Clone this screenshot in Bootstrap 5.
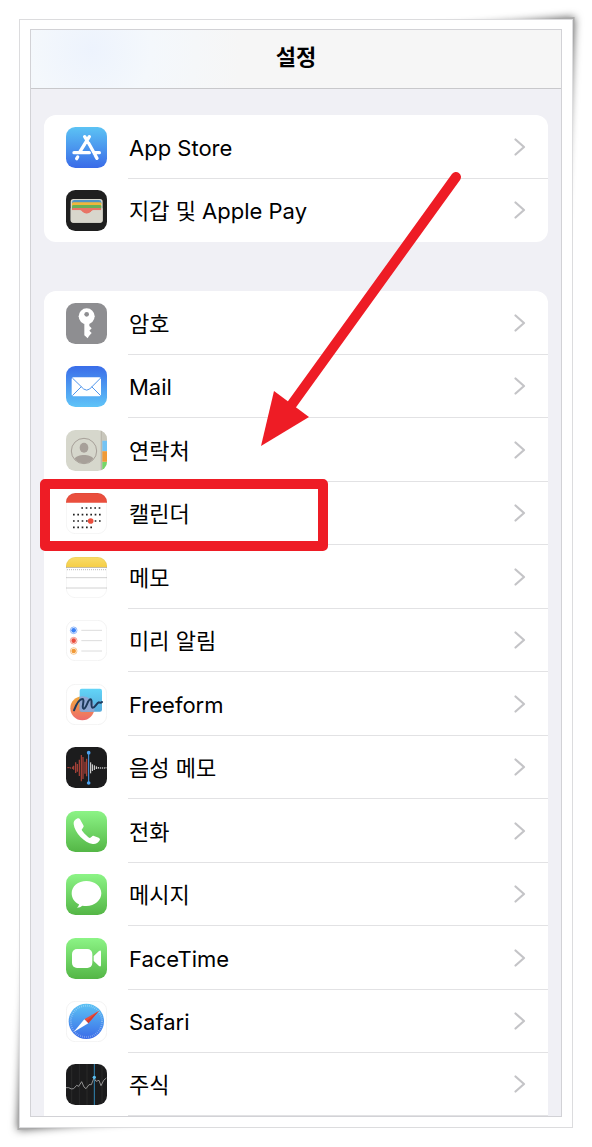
<!DOCTYPE html>
<html lang="ko">
<head>
<meta charset="utf-8">
<meta name="viewport" content="width=device-width, initial-scale=1">
<title>설정</title>
<link href="https://cdn.jsdelivr.net/npm/bootstrap@5.3.0/dist/css/bootstrap.min.css" rel="stylesheet">
<style>
  body { background: #fff; color: #000; font-family: Inter, "Noto Sans CJK KR", sans-serif; font-size: 22px; line-height: 32px; }
  .page { padding: 19px; }
  .photo-frame { position: relative; z-index: 0; }
  .photo-frame::before, .photo-frame::after {
    content: ""; position: absolute; z-index: -1; width: 150px; height: 240px;
    background: #aaa; box-shadow: 0 0 9px rgba(0, 0, 0, .65);
  }
  .photo-frame::before { top: 11px; right: 11px; transform: skew(-3deg, -5deg); transform-origin: left bottom; }
  .photo-frame::after { bottom: 11px; left: 11px; transform: skew(-3deg, -5deg); transform-origin: right top; }
  .photo-paper { background: #fff; border: 1px solid #dcdcde; padding: 9px 10px 10px; }
  .phone { background: #f0f0f5; border: 1px solid #d2d2d6; }
  .title-bar { background: radial-gradient(circle at 60px 20px, #edf3fd, #f4f8fc 60px, #f6f6f6 150px); border-bottom: 1px solid #c8c8cb; padding: 11px 0 15px; }
  .title-bar h1 { font-size: 22px; line-height: 32px; font-weight: 600; }
  .groups { padding: 26px 13px 0; gap: 49px; }
  .settings-group { --bs-list-group-border-radius: 12px; --bs-list-group-border-width: 0; }
  .settings-row { background: #fff; height: 64px; padding: 0 0 0 22px; gap: 21px; color: #000; }
  .settings-row:nth-child(even), .settings-row:last-child { height: 63px; }
  .settings-row:hover { color: #000; }
  .row-body { border-bottom: 1px solid #e2e2e4; padding: 2px 22px 0 1px; }
  .no-line .row-body { border-color: transparent; }
  .app-icon { width: 41px; height: 41px; flex: none; }
  .chevron { width: 12px; height: 18px; margin-bottom: 2px; }
  .marked { z-index: 3; }
  .mark-box { position: absolute; left: -4px; top: -3px; width: 288px; height: 72px; border: 10px solid #ee1c25; border-radius: 5px; pointer-events: none; }
  .mark-arrow { position: absolute; left: 230px; top: 141px; width: 202px; height: 278px; z-index: 4; pointer-events: none; }
</style>
</head>
<body>
<svg width="0" height="0" class="position-absolute" aria-hidden="true">
  <defs>
    <linearGradient id="blueDown" x1="0" y1="0" x2="0" y2="1"><stop stop-color="#5cc3f4"/><stop offset="1" stop-color="#3a6be8"/></linearGradient>
    <linearGradient id="blueUp" x1="0" y1="0" x2="0" y2="1"><stop stop-color="#3a6de9"/><stop offset="1" stop-color="#5fc4f8"/></linearGradient>
    <linearGradient id="green" x1="0" y1="0" x2="0" y2="1"><stop stop-color="#8cf486"/><stop offset="1" stop-color="#54b646"/></linearGradient>
    <linearGradient id="yellow" x1="0" y1="0" x2="0" y2="1"><stop stop-color="#f9dd6a"/><stop offset="1" stop-color="#f5cd45"/></linearGradient>
    <linearGradient id="orange" x1="0" y1="0" x2="0" y2="1"><stop stop-color="#f2a93b"/><stop offset="1" stop-color="#ee6a6c"/></linearGradient>
    <linearGradient id="sky" x1="0" y1="0" x2="0" y2="1"><stop stop-color="#62d5f8"/><stop offset="1" stop-color="#55aadb"/></linearGradient>
    <clipPath id="tile"><rect width="123" height="123" rx="28"/></clipPath>
    <symbol id="chev" viewBox="0 0 12 18"><path d="M1.500 1.500 10 9l-8.500 7.500" fill="none" stroke="#c4c4c7" stroke-width="2.200" stroke-linecap="round" stroke-linejoin="round"/></symbol>
  </defs>
</svg>

<main class="page">
<div class="photo-frame">
<div class="photo-paper">
<div class="phone position-relative">
  <header class="title-bar text-center"><h1 class="m-0">설정</h1></header>
  <div class="groups d-flex flex-column">

    <div class="list-group settings-group">
      <a href="#" class="list-group-item settings-row d-flex align-items-center">
        <svg class="app-icon" viewBox="0 0 123 123" aria-hidden="true"><rect width="123" height="123" rx="28" fill="url(#blueDown)"/><g stroke="#fff" stroke-width="10" stroke-linecap="round" fill="none"><path d="M56 29 64 42M70 29 42 74M24 77H70M84 77H100M68 49 93 94M35 90 32 95"/></g><path d="M63 52 83 88" stroke="#4a91ee" stroke-width="2"/></svg>
        <span class="row-body d-flex flex-grow-1 align-items-center justify-content-between align-self-stretch">App Store<svg class="chevron" aria-hidden="true"><use href="#chev"/></svg></span>
      </a>
      <a href="#" class="list-group-item settings-row no-line d-flex align-items-center">
        <svg class="app-icon" viewBox="0 0 123 123" aria-hidden="true"><rect width="123" height="123" rx="28" fill="#1f1f1f"/><rect x="14" y="27" width="96" height="71" rx="8" fill="#d8d6cc"/><path d="M18 37q0-7 7-7h74q7 0 7 7v4H18z" fill="#5094c4"/><path d="M18 40q0-3 5-3h78q5 0 5 3v8H18z" fill="#f0b63b"/><path d="M18 49q0-4 5-4h78q5 0 5 4v8H18z" fill="#69b058"/><path d="M18 57q0-3 5-3h78q5 0 5 3v4H82c-6 0-7 10-20 10S48 61 42 61H18z" fill="#e87466"/><path d="M14 58v-3h4v6h24c6 0 7 10 20 10s14-10 20-10h24v-6h4v35q0 8-8 8H22q-8 0-8-8z" fill="#d8d6cc"/></svg>
        <span class="row-body d-flex flex-grow-1 align-items-center justify-content-between align-self-stretch">지갑 및 Apple Pay<svg class="chevron" aria-hidden="true"><use href="#chev"/></svg></span>
      </a>
    </div>

    <div class="list-group settings-group rounded-bottom-0">
      <a href="#" class="list-group-item settings-row d-flex align-items-center">
        <svg class="app-icon" viewBox="0 0 123 123" aria-hidden="true"><rect width="123" height="123" rx="28" fill="#8e8e91"/><circle cx="62" cy="40" r="24" fill="#fff"/><path d="M55 58h15v11l7 7-7 7 7 7-8 9-4 7-10-9z" fill="#fff"/><circle cx="62" cy="34" r="7" fill="#8e8e91"/></svg>
        <span class="row-body d-flex flex-grow-1 align-items-center justify-content-between align-self-stretch">암호<svg class="chevron" aria-hidden="true"><use href="#chev"/></svg></span>
      </a>
      <a href="#" class="list-group-item settings-row d-flex align-items-center">
        <svg class="app-icon" viewBox="0 0 123 123" aria-hidden="true"><rect width="123" height="123" rx="28" fill="url(#blueUp)"/><rect x="17" y="34" width="88" height="57" rx="5" fill="#fff"/><path d="M19 36 53 69q9 7 18 0L104 36M19 89l27-27M104 89 77 62" fill="none" stroke="#5096ec" stroke-width="3"/></svg>
        <span class="row-body d-flex flex-grow-1 align-items-center justify-content-between align-self-stretch">Mail<svg class="chevron" aria-hidden="true"><use href="#chev"/></svg></span>
      </a>
      <a href="#" class="list-group-item settings-row d-flex align-items-center">
        <svg class="app-icon" viewBox="0 0 123 123" aria-hidden="true"><g clip-path="url(#tile)"><path fill="#d6d7cc" d="M0 0h123v123H0z"/><path fill="#bbb8ad" d="M104 0h5v123h-5z"/><path fill="#c8c6bb" d="M109 0h14v32h-14z"/><path fill="#73c3f4" d="M109 32h14v31h-14z"/><path fill="#ef9a37" d="M109 64h14v31h-14z"/><path fill="#75d768" d="M109 96h14v27h-14z"/></g><circle cx="54" cy="63" r="38" fill="none" stroke="#a7a099" stroke-width="3"/><ellipse cx="54" cy="53" rx="13" ry="15" fill="#a7a099"/><path d="M26 86c7-15 49-15 56 0-14 18-42 18-56 0z" fill="#a7a099"/></svg>
        <span class="row-body d-flex flex-grow-1 align-items-center justify-content-between align-self-stretch">연락처<svg class="chevron" aria-hidden="true"><use href="#chev"/></svg></span>
      </a>
      <a href="#" class="list-group-item settings-row marked d-flex align-items-center">
        <svg class="app-icon" viewBox="0 0 123 123" aria-hidden="true"><g clip-path="url(#tile)"><path fill="#fff" d="M0 0h123v123H0z"/><path fill="#ea4e3d" d="M0 0h123v29H0z"/></g><rect x="1" y="1" width="121" height="121" rx="27" fill="none" stroke="#000" stroke-opacity=".07" stroke-width="2"/><g stroke="#222" stroke-width="5" stroke-dasharray="5 8"><path d="M46 45h58M21 65h83M21 84h83M21 103h57"/></g><circle cx="74" cy="84" r="8.500" fill="#ea4e3d"/></svg>
        <span class="row-body d-flex flex-grow-1 align-items-center justify-content-between align-self-stretch">캘린더<svg class="chevron" aria-hidden="true"><use href="#chev"/></svg></span>
        <span class="mark-box"></span>
      </a>
      <a href="#" class="list-group-item settings-row d-flex align-items-center">
        <svg class="app-icon" viewBox="0 0 123 123" aria-hidden="true"><g clip-path="url(#tile)"><path fill="#fff" d="M0 0h123v123H0z"/><path fill="url(#yellow)" d="M0 0h123v31H0z"/><path fill="#c5bda5" d="M0 30h123v3H0z"/><path d="M3 38h120" stroke="#aaa" stroke-width="4" stroke-dasharray="2 4"/><path d="M0 62h123M0 93h123" stroke="#d2d2d2" stroke-width="3"/></g><rect x="1" y="1" width="121" height="121" rx="27" fill="none" stroke="#000" stroke-opacity=".07" stroke-width="2"/></svg>
        <span class="row-body d-flex flex-grow-1 align-items-center justify-content-between align-self-stretch">메모<svg class="chevron" aria-hidden="true"><use href="#chev"/></svg></span>
      </a>
      <a href="#" class="list-group-item settings-row d-flex align-items-center">
        <svg class="app-icon" viewBox="0 0 123 123" aria-hidden="true"><rect x="1" y="1" width="121" height="121" rx="27" fill="#fff" stroke="#ededed" stroke-width="2"/><path d="M46 31h62M46 62h62M46 93h62" stroke="#dcdcdc" stroke-width="3"/><g fill="none" stroke-width="3" stroke-opacity=".55"><circle cx="23" cy="31" r="10" stroke="#3b82f6"/><circle cx="23" cy="62" r="10" stroke="#ea4e3d"/><circle cx="23" cy="93" r="10" stroke="#f19a37"/></g><circle cx="23" cy="31" r="7" fill="#3b82f6"/><circle cx="23" cy="62" r="7" fill="#ea4e3d"/><circle cx="23" cy="93" r="7" fill="#f19a37"/></svg>
        <span class="row-body d-flex flex-grow-1 align-items-center justify-content-between align-self-stretch">미리 알림<svg class="chevron" aria-hidden="true"><use href="#chev"/></svg></span>
      </a>
      <a href="#" class="list-group-item settings-row d-flex align-items-center">
        <svg class="app-icon" viewBox="0 0 123 123" aria-hidden="true"><rect x="1" y="1" width="121" height="121" rx="27" fill="#fff" stroke="#ededed" stroke-width="2"/><circle cx="49" cy="73" r="36" fill="url(#orange)"/><rect x="41" y="14" width="67" height="69" rx="6" fill="url(#sky)"/><path d="M41 38q18-4 34 9 12 13 10 36H47q-6 0-6-6z" fill="#8fa6d2"/><path d="M24 79c7-18 17-34 25-34 9 0-4 28 4 29 8 0 12-27 20-28 8 0-1 24 7 25 8 0 11-14 19-16 4 2 6 2 9-1" fill="none" stroke="#1e3a5c" stroke-width="6" stroke-linecap="round"/></svg>
        <span class="row-body d-flex flex-grow-1 align-items-center justify-content-between align-self-stretch">Freeform<svg class="chevron" aria-hidden="true"><use href="#chev"/></svg></span>
      </a>
      <a href="#" class="list-group-item settings-row d-flex align-items-center">
        <svg class="app-icon" viewBox="0 0 123 123" aria-hidden="true"><rect width="123" height="123" rx="28" fill="#1c1c1d"/><path d="M4 62h7M14 61v4M20 59v7" stroke="#b0443b" stroke-width="3"/><path d="M23 56v12M29 46v32M34 51v23M40 38v49M46 24v79M51 30v66M57 44v36M62 35v53" stroke="#b0443b" stroke-width="3.500"/><path d="M74 46v33M79 52v20M85 55v14M91 58v8M97 60v5M103 61v4M109 61v4M115 61v4M120 61v3" stroke="#eee" stroke-width="3"/><path d="M68 17v90" stroke="#4da2f0" stroke-width="3"/><circle cx="68" cy="17" r="5.500" fill="#4da2f0"/><circle cx="68" cy="108" r="5.500" fill="#4da2f0"/></svg>
        <span class="row-body d-flex flex-grow-1 align-items-center justify-content-between align-self-stretch">음성 메모<svg class="chevron" aria-hidden="true"><use href="#chev"/></svg></span>
      </a>
      <a href="#" class="list-group-item settings-row d-flex align-items-center">
        <svg class="app-icon" viewBox="0 0 123 123" aria-hidden="true"><rect width="123" height="123" rx="28" fill="url(#green)"/><path d="M35 22c-8 3-13 9-12 17 3 27 33 57 57 60 9 1 17-3 21-11 2-3 0-6-3-8L84 75c-3-1-5 0-7 2l-5 4c-5-1-23-19-25-25l4-6c2-2 3-4 1-7L42 25c-2-3-4-4-7-3z" fill="#fff"/></svg>
        <span class="row-body d-flex flex-grow-1 align-items-center justify-content-between align-self-stretch">전화<svg class="chevron" aria-hidden="true"><use href="#chev"/></svg></span>
      </a>
      <a href="#" class="list-group-item settings-row d-flex align-items-center">
        <svg class="app-icon" viewBox="0 0 123 123" aria-hidden="true"><rect width="123" height="123" rx="28" fill="url(#green)"/><path d="M61 21c25 0 45 16 45 37S86 96 61 96q-6 0-12-1-6 6-16 6 6-4 6-10C26 85 17 73 17 58c0-21 19-37 44-37z" fill="#fff"/></svg>
        <span class="row-body d-flex flex-grow-1 align-items-center justify-content-between align-self-stretch">메시지<svg class="chevron" aria-hidden="true"><use href="#chev"/></svg></span>
      </a>
      <a href="#" class="list-group-item settings-row d-flex align-items-center">
        <svg class="app-icon" viewBox="0 0 123 123" aria-hidden="true"><rect width="123" height="123" rx="28" fill="url(#green)"/><rect x="18" y="33" width="61" height="57" rx="15" fill="#fff"/><path d="M83 54 99 39q6-4 6 3v39q0 7-6 3L83 69z" fill="#fff"/></svg>
        <span class="row-body d-flex flex-grow-1 align-items-center justify-content-between align-self-stretch">FaceTime<svg class="chevron" aria-hidden="true"><use href="#chev"/></svg></span>
      </a>
      <a href="#" class="list-group-item settings-row d-flex align-items-center">
        <svg class="app-icon" viewBox="0 0 123 123" aria-hidden="true"><rect x="1" y="1" width="121" height="121" rx="27" fill="#fff" stroke="#ededed" stroke-width="2"/><circle cx="61" cy="61" r="53" fill="url(#blueDown)"/><circle cx="61" cy="61" r="47" fill="none" stroke="#fff" stroke-opacity=".4" stroke-width="6" stroke-dasharray="2 4"/><path d="M99 29 55 55l6 6 6 6z" fill="#ea4e3d"/><path d="M99 29 67 67l-6-6z" fill="#d33d33"/><path d="M23 93 55 55l6 6 6 6z" fill="#fff"/></svg>
        <span class="row-body d-flex flex-grow-1 align-items-center justify-content-between align-self-stretch">Safari<svg class="chevron" aria-hidden="true"><use href="#chev"/></svg></span>
      </a>
      <a href="#" class="list-group-item settings-row d-flex align-items-center">
        <svg class="app-icon" viewBox="0 0 123 123" aria-hidden="true"><g clip-path="url(#tile)"><path fill="#1b1b1c" d="M0 0h123v123H0z"/><path d="M17 0v123M40 0v123M63 0v123M108 0v123" stroke="#303032" stroke-width="2"/><path d="M0 71h8q8 6 15 3l9-10 6 3 9-14 7 16 6 5 9-12h7l8-20 6 10 9-3 6 16 8-16 8-7" fill="none" stroke="#aaa" stroke-width="2.500"/><path d="M85 0v123" stroke="#3186b5" stroke-width="3"/></g><circle cx="85" cy="40" r="5" fill="#5cc0f2"/></svg>
        <span class="row-body d-flex flex-grow-1 align-items-center justify-content-between align-self-stretch">주식<svg class="chevron" aria-hidden="true"><use href="#chev"/></svg></span>
      </a>
    </div>
  </div>
  <svg class="mark-arrow" viewBox="0 0 202 278" aria-hidden="true"><path d="M195 6 29 236" stroke="#ee1c25" stroke-width="10" stroke-linecap="round"/><path d="M0 275 13 220l35 26z" fill="#ee1c25"/></svg>
</div>
</div>
</div>
</main>
<script src="https://cdn.jsdelivr.net/npm/bootstrap@5.3.0/dist/js/bootstrap.bundle.min.js"></script>
</body>
</html>
